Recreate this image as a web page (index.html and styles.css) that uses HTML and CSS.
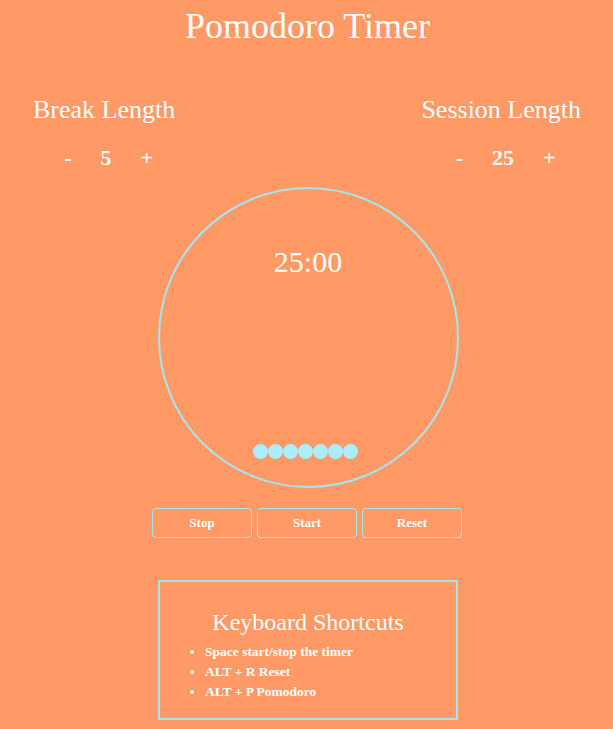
FILE: index.html
```html
<!DOCTYPE html>
<html>
<head>
<meta charset="utf-8">
<link rel="stylesheet" href="styles.css">
</head>
<body>
<h1 class="title">Pomodoro Timer</h1>
<div class="lengths">
  <div class="length">
    <h2 class="length-label">Break Length</h2>
    <div class="controls">
      <span class="ctl">-</span>
      <span class="val">5</span>
      <span class="ctl">+</span>
    </div>
  </div>
  <div class="length">
    <h2 class="length-label">Session Length</h2>
    <div class="controls">
      <span class="ctl">-</span>
      <span class="val">25</span>
      <span class="ctl">+</span>
    </div>
  </div>
</div>
<div class="clock-wrap">
  <div class="clock">
    <div class="time">25:00</div>
    <div class="dots">
      <span class="dot"></span><span class="dot"></span><span class="dot"></span><span class="dot"></span><span class="dot"></span><span class="dot"></span><span class="dot"></span>
    </div>
  </div>
</div>
<div class="buttons">
  <button class="btn">Stop</button>
  <button class="btn">Start</button>
  <button class="btn">Reset</button>
</div>
<div class="shortcuts">
  <h3 class="sc-title">Keyboard Shortcuts</h3>
  <ul class="sc-list">
    <li>Space start/stop the timer</li>
    <li>ALT + R Reset</li>
    <li>ALT + P Pomodoro</li>
  </ul>
</div>
</body>
</html>
```
FILE: styles.css
```css
* { box-sizing: border-box; }
html, body {
  margin: 0;
  padding: 0;
  background: #ff9966;
}
body {
  color: #ffffff;
  font-family: "Liberation Serif", "DejaVu Serif", serif;
  width: 613px;
  height: 729px;
  overflow: hidden;
}
.title {
  margin: 0;
  padding-top: 6px;
  padding-left: 2px;
  height: 48px;
  text-align: center;
  font-size: 36px;
  font-weight: normal;
  line-height: 40px;
}
.lengths {
  display: flex;
  justify-content: space-between;
  padding: 47px 32px 0 33px;
}
.length {
  display: flex;
  flex-direction: column;
  align-items: center;
}
.length-label {
  margin: 0;
  font-size: 26px;
  font-weight: normal;
  line-height: 30px;
  height: 30px;
}
.controls {
  display: flex;
  align-items: center;
  gap: 29px;
  margin-top: 21px;
  margin-left: 9px;
  font-size: 22px;
  font-weight: bold;
  line-height: 24px;
}
.clock-wrap {
  display: flex;
  justify-content: center;
  padding-top: 17px;
  padding-left: 3px;
}
.clock {
  width: 301px;
  height: 301px;
  border: 2px solid #a6e4ee;
  border-radius: 50%;
  display: flex;
  flex-direction: column;
  align-items: center;
}
.time {
  margin-top: 56px;
  font-size: 30px;
  line-height: 34px;
}
.dots {
  display: flex;
  margin-top: 165px;
  margin-right: 6px;
}
.dot {
  width: 15px;
  height: 15px;
  border-radius: 50%;
  background: #aaeeff;
}
.buttons {
  display: flex;
  justify-content: center;
  gap: 5px;
  padding-top: 20px;
  padding-left: 1px;
}
.btn {
  width: 100px;
  height: 30px;
  background: transparent;
  border: 1px solid #a6e4ee;
  border-radius: 4px;
  color: #ffffff;
  font-family: "Liberation Serif", "DejaVu Serif", serif;
  font-weight: bold;
  font-size: 13px;
  padding: 0;
}
.shortcuts {
  width: 300px;
  margin: 42px 0 0 158px;
  height: 140px;
  border: 2px solid #a6e4ee;
  padding-top: 26px;
}
.sc-title {
  margin: 0;
  text-align: center;
  font-size: 24px;
  font-weight: normal;
  line-height: 28px;
}
.sc-list {
  margin: 6px 0 0;
  padding-left: 45px;
  font-size: 13.5px;
  font-weight: bold;
  line-height: 20px;
}
```
